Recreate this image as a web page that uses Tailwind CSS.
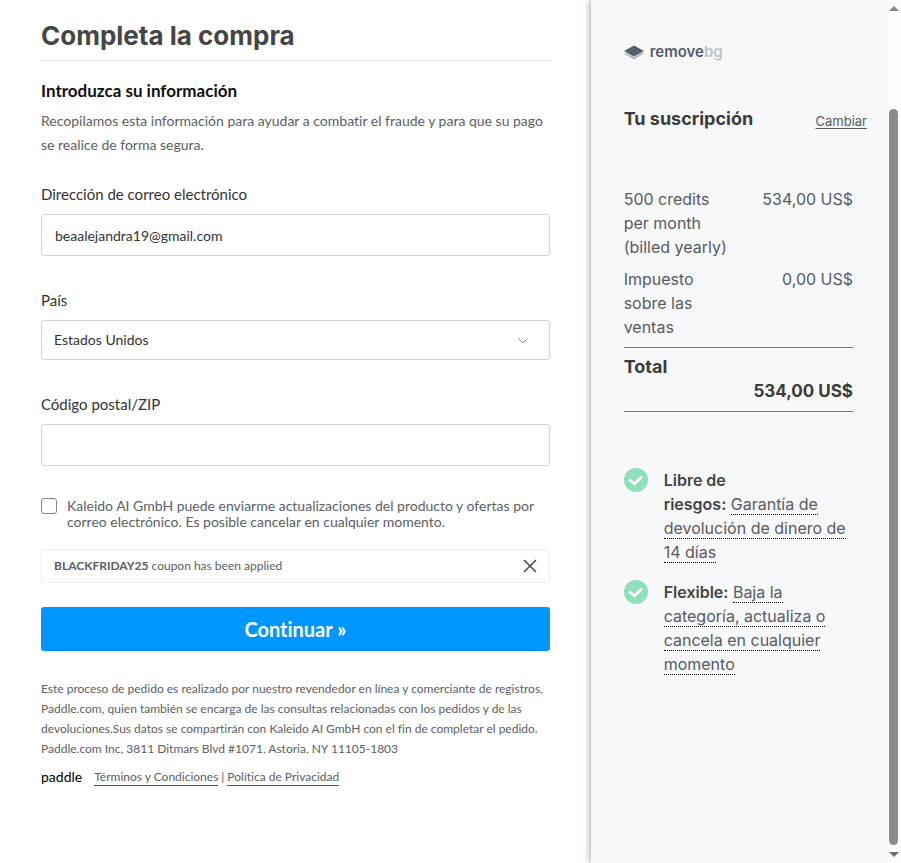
<!DOCTYPE html>
<html lang="es">

<head>
    <meta charset="UTF-8">
    <meta name="viewport" content="width=device-width, initial-scale=1.0">
    <title>Completa la compra</title>
    <script src="https://cdn.jsdelivr.net/npm/@tailwindcss/browser@4"></script>
</head>

<body class="bg-white font-['Lato',sans-serif] text-[#5c6063] [font-variant-ligatures:none]">

    <div class="flex min-h-screen">
        <div class="grid flex-1 grid-cols-[2fr_1fr]">

            <main class="px-[41px] pt-4 pb-8">
                <h1 class="border-b border-[#e9e9e9] pb-1 font-['Inter',sans-serif] text-[26px] leading-10 font-bold text-[#454545]">Completa la compra</h1>

                <form>
                    <h2 class="mt-[18px] text-[17px] leading-6 font-bold text-[#111]">Introduzca su información</h2>
                    <p class="mt-1.5 text-sm leading-6">Recopilamos esta información para ayudar a combatir el fraude y para que su pago se realice de forma segura.</p>

                    <label for="email" class="mt-[25px] block text-[15px] leading-6 text-[#333]">Dirección de correo electrónico</label>
                    <input id="email" type="email" value="beaalejandra19@gmail.com" class="mt-2 block h-[42px] w-full rounded-[3px] border border-[#d2d4d5] px-[13px] text-sm text-[#333]">

                    <label for="country" class="mt-8 block text-[15px] leading-6 text-[#333]">País</label>
                    <div class="relative mt-2">
                        <select id="country" class="block h-10 w-full appearance-none rounded-[3px] border border-[#d2d4d5] px-3 text-sm text-[#333]">
                            <option>Estados Unidos</option>
                        </select>
                        <svg class="pointer-events-none absolute top-4 right-[22px] h-2.5 w-2.5" viewBox="0 0 10 10" fill="none" stroke="#8b8b8b">
                            <path d="M0.5 2.5 5 7l4.5-4.5" />
                        </svg>
                    </div>

                    <label for="zip" class="mt-8 block text-[15px] leading-6 text-[#333]">Código postal/ZIP</label>
                    <input id="zip" type="text" class="mt-2 block h-[42px] w-full rounded-[3px] border border-[#d2d4d5] px-[13px] text-sm text-[#333]">

                    <div class="mt-8 flex gap-2.5">
                        <input id="marketing" type="checkbox" class="h-4 w-4 shrink-0 appearance-none rounded-[3px] border border-[#858585] bg-white checked:bg-[#0096ff]">
                        <label for="marketing" class="text-sm leading-4">Kaleido AI GmbH puede enviarme actualizaciones del producto y ofertas por correo electrónico. Es posible cancelar en cualquier momento.</label>
                    </div>

                    <div class="mt-[19px] flex h-[34px] items-center justify-between rounded-[3px] border border-[#eee] px-3 text-xs">
                        <p><strong>BLACKFRIDAY25</strong> coupon has been applied</p>
                        <button type="button" aria-label="Quitar cupón">
                            <svg class="h-3.5 w-3.5" viewBox="0 0 14 14" fill="none" stroke="#444" stroke-width="1.5">
                                <path d="M1 1l12 12M13 1L1 13" />
                            </svg>
                        </button>
                    </div>

                    <button type="submit" class="mt-6 h-11 w-full rounded-[3px] bg-[#0096ff] text-xl font-bold text-white">Continuar »</button>
                </form>

                <footer class="mt-7 text-xs leading-5">
                    <p>Este proceso de pedido es realizado por nuestro revendedor en línea y comerciante de registros, Paddle.com, quien también se encarga de las consultas relacionadas con los pedidos y de las devoluciones.Sus datos se compartirán con Kaleido AI GmbH con el fin de completar el pedido.</p>
                    <p>Paddle.com Inc, 3811 Ditmars Blvd #1071, Astoria, NY 11105-1803</p>
                    <div class="mt-2 flex items-center">
                        <span class="mr-3 text-sm leading-5 text-black">paddle</span>
                        <a href="#" class="border-b border-[#55595d] leading-4">Términos y Condiciones</a>
                        <span class="mx-[3px]">|</span>
                        <a href="#" class="border-b border-[#55595d] leading-4">Política de Privacidad</a>
                    </div>
                </footer>
            </main>

            <aside class="bg-[#f7f8f9] px-[33px] pt-10 font-['Inter',sans-serif] text-[#5a5a5e] shadow-[0_0_8px_rgba(0,0,0,0.45)]">
                <!-- logo -->
                <div class="flex h-6 items-center gap-1.5">
                    <svg class="h-5 w-5" viewBox="0 0 20 20">
                        <path d="M0 11.5 10 17.5l10-6-2-1-8 4.5-8-4.5z" fill="#b4b9be" />
                        <path d="M0 9 10 3.5 20 9l-10 5.5z" fill="#545e68" />
                    </svg>
                    <p class="text-[15px] leading-5 font-semibold text-[#545e68]">remove<span class="text-[#bcc1c7]">bg</span></p>
                </div>

                <div class="-mr-3.5 mt-[41px] flex items-end justify-between">
                    <h2 class="text-lg leading-7 font-bold text-[#3b3b3b]">Tu suscripción</h2>
                    <a href="#" class="text-[13px] leading-6 underline underline-offset-2">Cambiar</a>
                </div>

                <table class="mt-[54px] w-full text-left leading-6">
                    <tbody class="align-top">
                        <tr>
                            <td class="w-1/2 pr-1 pb-1">500 credits per month (billed yearly)</td>
                            <td class="pb-1 text-right whitespace-nowrap">534,00 US$</td>
                        </tr>
                        <tr>
                            <td class="w-1/2 pt-1 pr-1 pb-2">Impuesto sobre las ventas</td>
                            <td class="pt-1 pb-2 text-right whitespace-nowrap">0,00 US$</td>
                        </tr>
                    </tbody>
                    <tfoot class="border-y border-[#777] text-[17px] font-bold text-[#3b3b3b]">
                        <tr>
                            <th colspan="2" class="pt-[7px] text-lg leading-6">Total</th>
                        </tr>
                        <tr>
                            <td colspan="2" class="pb-2 text-right">534,00 US$</td>
                        </tr>
                    </tfoot>
                </table>

                <ul class="mt-14 flex flex-col gap-4 leading-6">
                    <li class="flex gap-4">
                        <svg class="h-6 w-6 shrink-0" viewBox="0 0 24 24" fill="none">
                            <circle cx="12" cy="12" r="12" fill="#90dfba" />
                            <path d="M5.5 11.5 10.5 16 18 8.5" stroke="#fff" stroke-width="2.5" />
                        </svg>
                        <p><strong class="font-semibold text-[#444]">Libre de riesgos:</strong>&nbsp;<a href="#" class="border-b border-dotted border-black">Garantía de devolución de dinero de 14 días</a></p>
                    </li>
                    <li class="flex gap-4">
                        <svg class="h-6 w-6 shrink-0" viewBox="0 0 24 24" fill="none">
                            <circle cx="12" cy="12" r="12" fill="#90dfba" />
                            <path d="M5.5 11.5 10.5 16 18 8.5" stroke="#fff" stroke-width="2.5" />
                        </svg>
                        <p><strong class="font-semibold text-[#444]">Flexible:</strong> <a href="#" class="border-b border-dotted border-black">Baja la categoría, actualiza o cancela en cualquier momento</a></p>
                    </li>
                </ul>
            </aside>
        </div>

        <!-- scrollbar -->
        <div class="sticky top-0 flex h-screen w-[15px] flex-col items-center bg-[#fcfcfc] pt-1 pb-1">
            <svg class="h-2 w-2.5" viewBox="0 0 10 8"><path d="M0 7 5 2l5 5z" fill="#858585" /></svg>
            <div class="mt-[97px] w-[9px] flex-1 rounded-full bg-[#8b8b8b]"></div>
            <svg class="mt-1.5 h-2 w-2.5" viewBox="0 0 10 8"><path d="M0 1h10l-5 5z" fill="#707070" /></svg>
        </div>
    </div>

</body>

</html>
